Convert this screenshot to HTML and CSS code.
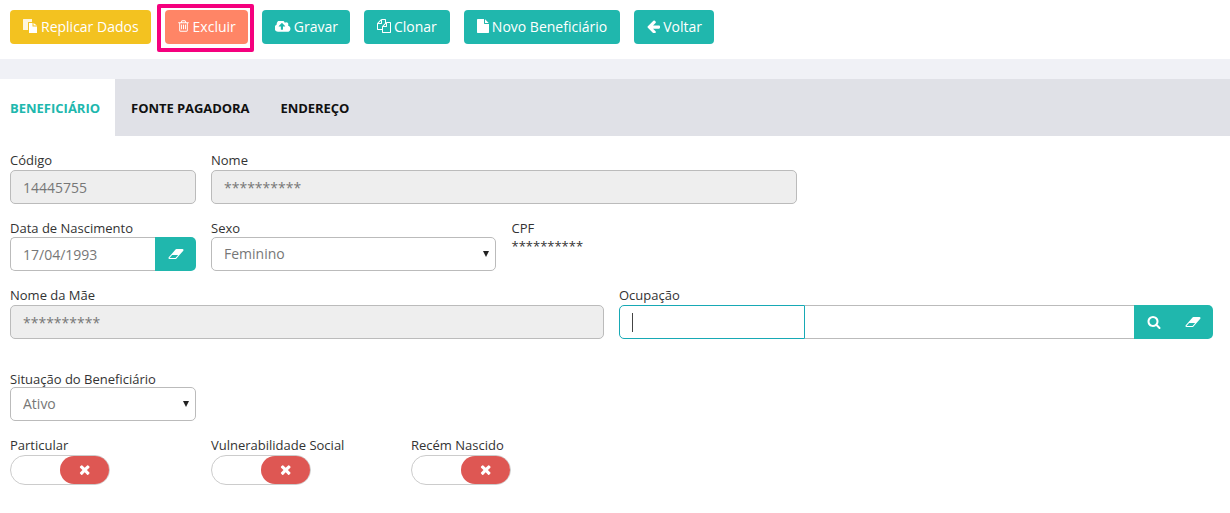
FILE: index.html
```html
<!DOCTYPE html>
<html lang="pt-BR">
<head>
<meta charset="utf-8">
<title>Beneficiário</title>
<link rel="stylesheet" href="styles.css">
</head>
<body>
<svg class="sprite" aria-hidden="true">
  <symbol id="i-eraser" viewBox="0 256 2048 1280"><path d="M960 1408l336-384h-768l-336 384h768zm1013-1077q15 34 9.500 71.500t-30.500 65.500l-896 1024q-38 44-96 44h-768q-38 0-69.500-20.500t-47.500-54.500q-15-34-9.500-71.500t30.500-65.500l896-1024q38-44 96-44h768q38 0 70 20.500t47 54.500z"/></symbol>
  <symbol id="i-times" viewBox="220 340 1300 1220"><path d="M1490 1322q0 40-28 68l-136 136q-28 28-68 28t-68-28l-294-294-294 294q-28 28-68 28t-68-28l-136-136q-28-28-28-68t28-68l294-294-294-294q-28-28-28-68t28-68l136-136q28-28 68-28t68 28l294 294 294-294q28-28 68-28t68 28l136 136q28 28 28 68t-28 68l-294 294 294 294q28 28 28 68z"/></symbol>
</svg>
<div class="toolbar">
  <button class="btn btn-yellow btn-trim" type="button">
    <svg class="ico ico-replicar" viewBox="0 0 14 14"><path d="M.5 0H9v3H5.500a.5.5 0 0 0-.5.5V11H.5a.5.5 0 0 1-.5-.5V.5A.5.5 0 0 1 .5 0z" opacity=".85"/><path d="M6 4h3.500v3.500H14V14H6z"/><path d="M10.500 4L14 6.500h-3.500z"/></svg>Replicar Dados</button>
  <span class="focus-ring">
    <button class="btn btn-coral btn-trim" type="button">
      <svg class="ico ico-trash" viewBox="160 128 1472 1536"><path d="M704 736v576q0 14-9 23t-23 9h-64q-14 0-23-9t-9-23v-576q0-14 9-23t23-9h64q14 0 23 9t9 23zm256 0v576q0 14-9 23t-23 9h-64q-14 0-23-9t-9-23v-576q0-14 9-23t23-9h64q14 0 23 9t9 23zm256 0v576q0 14-9 23t-23 9h-64q-14 0-23-9t-9-23v-576q0-14 9-23t23-9h64q14 0 23 9t9 23zm128 724v-948h-896v948q0 22 7 40.500t14.500 27 10.500 8.500h832q3 0 10.500-8.500t14.500-27 7-40.500zm-672-1076h448l-48-117q-7-9-17-11h-317q-10 2-17 11zm928 32v64q0 14-9 23t-23 9h-96v948q0 83-47 143.500t-113 60.500h-832q-66 0-113-58.500t-47-141.500v-952h-96q-14 0-23-9t-9-23v-64q0-14 9-23t23-9h309l70-167q15-37 54-63t79-26h320q40 0 79 26t54 63l70 167h309q14 0 23 9t9 23z"/></svg>Excluir</button>
  </span>
  <button class="btn btn-teal btn-trim" type="button">
    <svg class="ico ico-cloud" viewBox="0 256 1920 1280"><path d="M1216 864q0-14-9-23l-352-352q-9-9-23-9t-23 9l-351 351q-10 12-10 24 0 14 9 23t23 9h224v352q0 13 9.500 22.500t22.500 9.500h192q13 0 22.500-9.500t9.500-22.500v-352h224q13 0 22.500-9.500t9.500-22.500zm640 288q0 159-112.500 271.500t-271.500 112.500h-1088q-185 0-316.500-131.500t-131.500-316.500q0-130 70-240t188-165q-2-30-2-43 0-212 150-362t362-150q156 0 285.500 87t188.500 231q71-62 166-62 106 0 181 75t75 181q0 76-41 138 130 31 213.500 135.500t83.500 238.500z"/></svg>Gravar</button>
  <button class="btn btn-teal" type="button">
    <svg class="ico ico-clone" viewBox="0 0 1792 1792"><path d="M1696 384q40 0 68 28t28 68v1216q0 40-28 68t-68 28h-960q-40 0-68-28t-28-68v-288h-544q-40 0-68-28t-28-68v-672q0-40 20-88t48-76l408-408q28-28 76-48t88-20h416q40 0 68 28t28 68v328q68-40 128-40h416zm-544 213l-299 299h299v-299zm-640-384l-299 299h299v-299zm196 647l316-316v-416h-384v416q0 40-28 68t-68 28h-416v640h512v-256q0-40 20-88t48-76zm956 804v-1152h-384v416q0 40-28 68t-68 28h-416v640h896z"/></svg>Clonar</button>
  <button class="btn btn-teal" type="button">
    <svg class="ico ico-file" viewBox="128 0 1536 1792"><path d="M1152 512v-472q22 14 36 28l408 408q14 14 28 36h-472zm-128 32q0 40 28 68t68 28h544v1056q0 40-28 68t-68 28h-1344q-40 0-68-28t-28-68v-1600q0-40 28-68t68-28h800v544z"/></svg>Novo Beneficiário</button>
  <button class="btn btn-teal btn-trim" type="button">
    <svg class="ico ico-arrow" viewBox="128 128 1536 1536"><path d="M1664 896v128q0 53-32.500 90.500t-84.500 37.500h-704l293 294q38 36 38 90t-38 90l-75 76q-37 37-90 37-52 0-91-37l-651-652q-37-37-37-90 0-52 37-91l651-650q38-38 91-38 52 0 90 38l75 74q38 38 38 91t-38 91l-293 293h704q52 0 84.500 37.500t32.500 90.500z"/></svg>Voltar</button>
</div>
<div class="band"></div>
<nav class="tabs">
  <a class="tab tab-active">Beneficiário</a>
  <a class="tab tab-mid">Fonte Pagadora</a>
  <a class="tab tab-last">Endereço</a>
</nav>
<form class="form">
  <div class="row row-1">
    <div class="field w-186"><label>Código</label><input class="input" disabled value="14445755"></div>
    <div class="field w-586"><label>Nome</label><input class="input" disabled value="**********"></div>
  </div>
  <div class="row row-2">
    <div class="field w-186">
      <label>Data de Nascimento</label>
      <div class="group">
        <input class="input input-join" value="17/04/1993">
        <span class="addon addon-1"><svg class="eraser"><use href="#i-eraser"/></svg></span>
      </div>
    </div>
    <div class="field w-285">
      <label>Sexo</label>
      <div class="select"><select class="input"><option>Feminino</option></select></div>
    </div>
    <div class="field cpf"><label>CPF</label><div class="static">**********</div></div>
  </div>
  <div class="row row-3">
    <div class="field w-594"><label>Nome da Mãe</label><input class="input" disabled value="**********"></div>
    <div class="field w-594">
      <label>Ocupação</label>
      <div class="group">
        <div class="input input-focus"><span class="caret"></span></div>
        <input class="input input-mid">
        <span class="addon addon-2">
          <svg class="search" viewBox="0 0 1792 1792"><path d="M1216 832q0-185-131.500-316.500t-316.500-131.500-316.500 131.500-131.500 316.500 131.500 316.500 316.500 131.500 316.500-131.500 131.500-316.500zm512 832q0 52-38 90t-90 38q-54 0-90-38l-343-342q-179 124-399 124-143 0-273.500-55.500t-225-150-150-225-55.500-273.500 55.500-273.500 150-225 225-150 273.500-55.500 273.500 55.500 225 150 150 225 55.500 273.500q0 220-124 399l343 343q37 37 37 90z"/></svg>
          <svg class="eraser"><use href="#i-eraser"/></svg>
        </span>
      </div>
    </div>
  </div>
  <div class="row row-4">
    <div class="field w-186">
      <label>Situação do Beneficiário</label>
      <div class="select"><select class="input"><option>Ativo</option></select></div>
    </div>
  </div>
  <div class="row row-5">
    <div class="field w-186"><label>Particular</label><div class="switch"><span class="knob"><svg class="x"><use href="#i-times"/></svg></span></div></div>
    <div class="field w-185"><label>Vulnerabilidade Social</label><div class="switch"><span class="knob"><svg class="x"><use href="#i-times"/></svg></span></div></div>
    <div class="field w-186"><label>Recém Nascido</label><div class="switch"><span class="knob"><svg class="x"><use href="#i-times"/></svg></span></div></div>
  </div>
</form>
</body>
</html>
```
FILE: styles.css
```css
* { box-sizing: border-box; }
html, body { margin: 0; padding: 0; background: #fff; }
body {
  font-family: "Open Sans", "Liberation Sans", sans-serif;
  font-size: 14px;
  color: #333;
  height: 513px;
  overflow: hidden;
}
.sprite { display: none; }
.toolbar {
  height: 59px;
  padding: 10px 10px 0;
  display: flex;
  align-items: flex-start;
  gap: 14px;
}
.btn {
  height: 34px;
  border: 0;
  border-radius: 4px;
  padding: 0 13px 2px;
  font: 400 14px "Open Sans", sans-serif;
  color: #fff;
  display: inline-flex;
  align-items: center;
  gap: 3px;
  white-space: nowrap;
}
.btn-trim { padding-right: 12px; }
.btn-yellow { background: #f3c220; gap: 4px; }
.btn-coral { background: #ff8566; gap: 4px; }
.btn-teal { background: #20b7ad; }
.focus-ring {
  position: relative;
  display: flex;
}
.focus-ring::after {
  content: "";
  position: absolute;
  left: -8px;
  right: -6px;
  top: -6px;
  bottom: -8px;
  border: 4px solid #f5007e;
  border-radius: 2px;
  pointer-events: none;
}
.ico { fill: currentColor; flex: none; }
.ico-replicar { width: 14px; height: 14px; }
.ico-trash { width: 11px; height: 12px; }
.ico-cloud { width: 16px; height: 11px; }
.ico-clone { width: 14px; height: 14px; }
.ico-file { width: 12px; height: 14px; }
.ico-arrow { width: 13px; height: 13px; }
.band { height: 20px; background: #f0f1f6; }
.tabs {
  height: 57px;
  background: #e0e1e7;
  display: flex;
}
.tab {
  display: flex;
  align-items: center;
  padding: 0 15.500px;
  font-size: 13px;
  font-weight: 700;
  text-transform: uppercase;
  color: #111;
}
.tab-active { background: #fff; color: #20b7ad; padding: 0 15px 0 10px; }
.tab-mid { padding: 0 15.500px 0 16px; letter-spacing: -0.06px; }
.tab-last { letter-spacing: -0.06px; }
.form { padding: 0 10px; }
.row { display: flex; gap: 15px; }
.row-1 { padding-top: 16px; }
.row-2 { padding-top: 16px; }
.row-3 { padding-top: 16px; }
.row-4 { padding-top: 32px; }
.row-5 { padding-top: 16px; }
.field { display: flex; flex-direction: column; }
.field label {
  font-size: 13px;
  line-height: 17px;
  color: #333;
}
.row-1 label, .row-3 label { margin-bottom: 1px; }
.row-4 label { margin-bottom: -1px; }
.w-186 { width: 186px; }
.w-185 { width: 185px; }
.w-285 { width: 285px; }
.w-586 { width: 586px; }
.w-594 { width: 594px; }
.cpf { flex: 1; padding-left: 0.500px; }
.static { font-size: 13px; line-height: 17px; color: #333; margin-top: 1px; }
.input {
  display: block;
  width: 100%;
  height: 34px;
  border: 1px solid #bbb;
  border-radius: 5px;
  padding: 0 12px;
  background: #fff;
  color: #777;
  font: 400 14px "Open Sans", sans-serif;
  outline: 0;
}
.input:disabled { background: #eee; opacity: 1; color: #777; }
.select { position: relative; }
.select select { appearance: none; -webkit-appearance: none; padding-bottom: 2px; }
.select::after {
  content: "";
  position: absolute;
  right: 7px;
  top: 14px;
  border: 3.500px solid transparent;
  border-top: 6px solid #222;
  border-bottom: 0;
}
.group { display: flex; height: 34px; }
.input-join { flex: 1; min-width: 0; border-right: 0; border-radius: 5px 0 0 5px; }
.input-focus {
  flex: none;
  width: 186px;
  border: 1px solid #17a9b5;
  display: flex;
  align-items: center;
  border-radius: 5px 0 0 5px;
}
.caret { width: 1px; height: 19px; background: #444; }
.input-mid { flex: 1; min-width: 0; border-left: 0; border-right: 0; border-radius: 0; }
.addon {
  flex: none;
  background: #20b7ad;
  color: #fff;
  border-radius: 0 5px 5px 0;
  display: flex;
  align-items: center;
  justify-content: center;
  fill: #fff;
}
.addon-1 { width: 41px; }
.addon-2 { width: 79px; gap: 24px; }
.eraser { width: 16px; height: 10px; fill: #fff; }
.search { width: 14px; height: 14px; fill: #fff; }
.switch {
  position: relative;
  width: 100px;
  height: 30px;
  margin-top: 1px;
  border: 1px solid #ccc;
  border-radius: 15px;
  background: #fff;
}
.knob {
  position: absolute;
  right: 0;
  top: 0;
  width: 49px;
  height: 28px;
  border-radius: 14px;
  background: #de5753;
  display: flex;
  align-items: center;
  justify-content: center;
}
.x { width: 11px; height: 10px; fill: #fff; }
```
